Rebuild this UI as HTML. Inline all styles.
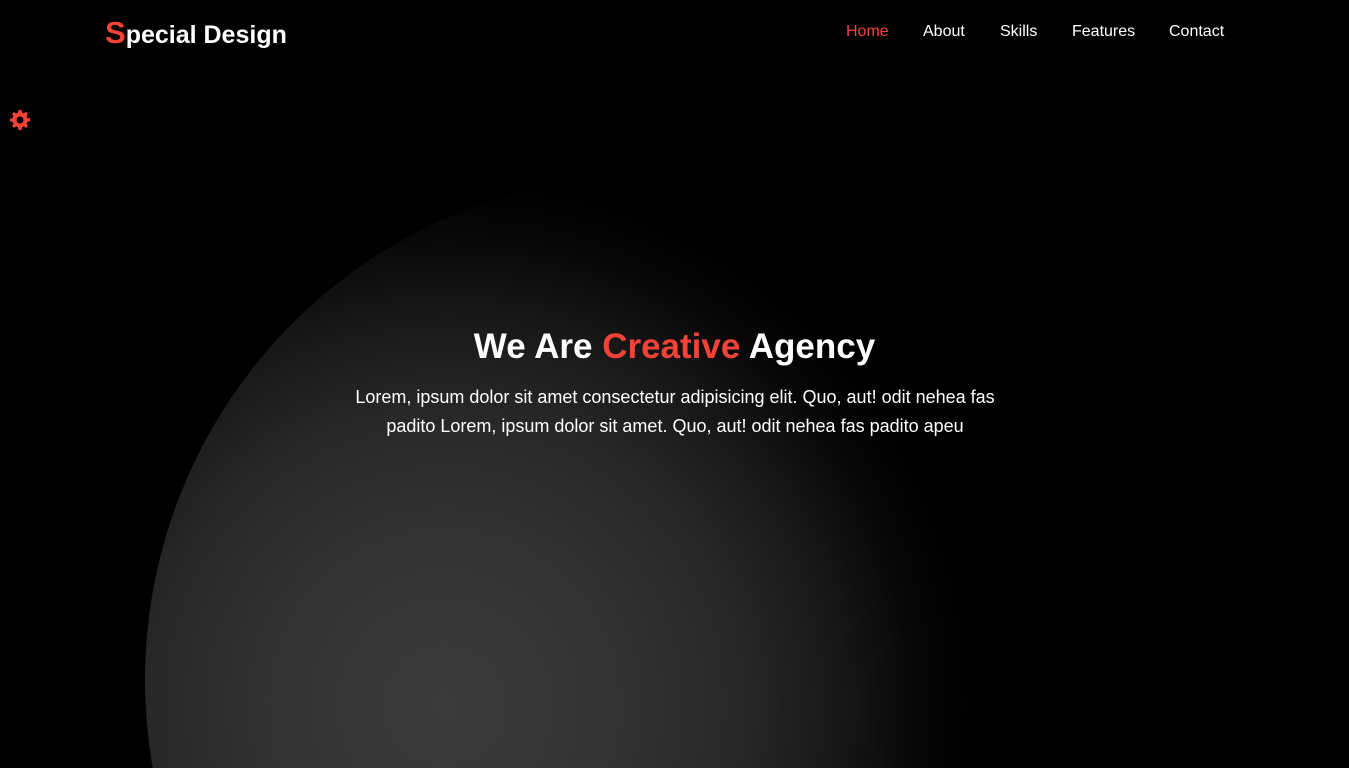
<!DOCTYPE html>
<html><head><meta charset="utf-8"><style>
*{margin:0;padding:0;box-sizing:border-box}
html,body{width:1349px;height:768px;overflow:hidden}
body{background:#000;position:relative;font-family:"Liberation Sans",Arial,sans-serif;color:#fff}
.clip{position:absolute;left:0;top:0;width:1349px;height:768px;overflow:hidden}
.moon{position:absolute;left:145px;top:175px;width:1010px;height:1010px;border-radius:50%;
background:radial-gradient(circle 560px at 300px 530px,#3a3a3a 0,#333 170px,#272727 300px,#161616 400px,#070707 470px,#000 530px)}
.logo{position:absolute;left:105px;top:15px;font-weight:bold;font-size:25px}
.logo span{color:#f44336;font-size:31px}
nav a{position:absolute;top:23px;font-size:16px;color:#fff;text-decoration:none;white-space:nowrap}
nav a.on{color:#f44336}
.gear{position:absolute;left:10px;top:110px}
h1{position:absolute;top:327px;left:0;width:1349px;text-align:center;font-size:35px;font-weight:bold}
h1 span{color:#f44336}
p{position:absolute;top:383px;left:340px;width:670px;text-align:center;font-size:18px;line-height:29px}
</style></head><body>
<div class="clip"><div class="moon"></div></div>
<div class="logo"><span>S</span>pecial Design</div>
<nav><a class="on" style="left:846px">Home</a><a style="left:923px">About</a><a style="left:1000px">Skills</a><a style="left:1072px">Features</a><a style="left:1169px">Contact</a></nav>
<svg class="gear" width="20" height="20" viewBox="0 0 20 20"><path fill="#f44336" d="M8.5 0h3l.5 2.6 1.7.8 2.2-1.5 2.1 2.1-1.5 2.2.8 1.7 2.7.5v3l-2.7.5-.8 1.7 1.5 2.2-2.1 2.1-2.2-1.5-1.7.8-.5 2.8h-3l-.5-2.8-1.7-.8-2.2 1.5-2.1-2.1 1.5-2.2-.8-1.7L0 11.5v-3l2.6-.5.8-1.7-1.5-2.2 2.1-2.1 2.2 1.5 1.7-.8zM10 6.5a3.5 3.5 0 1 0 0 7 3.5 3.5 0 0 0 0-7z"/></svg>
<h1>We Are <span>Creative</span> Agency</h1>
<p>Lorem, ipsum dolor sit amet consectetur adipisicing elit. Quo, aut! odit nehea fas padito Lorem, ipsum dolor sit amet. Quo, aut! odit nehea fas padito apeu</p>
</body></html>
